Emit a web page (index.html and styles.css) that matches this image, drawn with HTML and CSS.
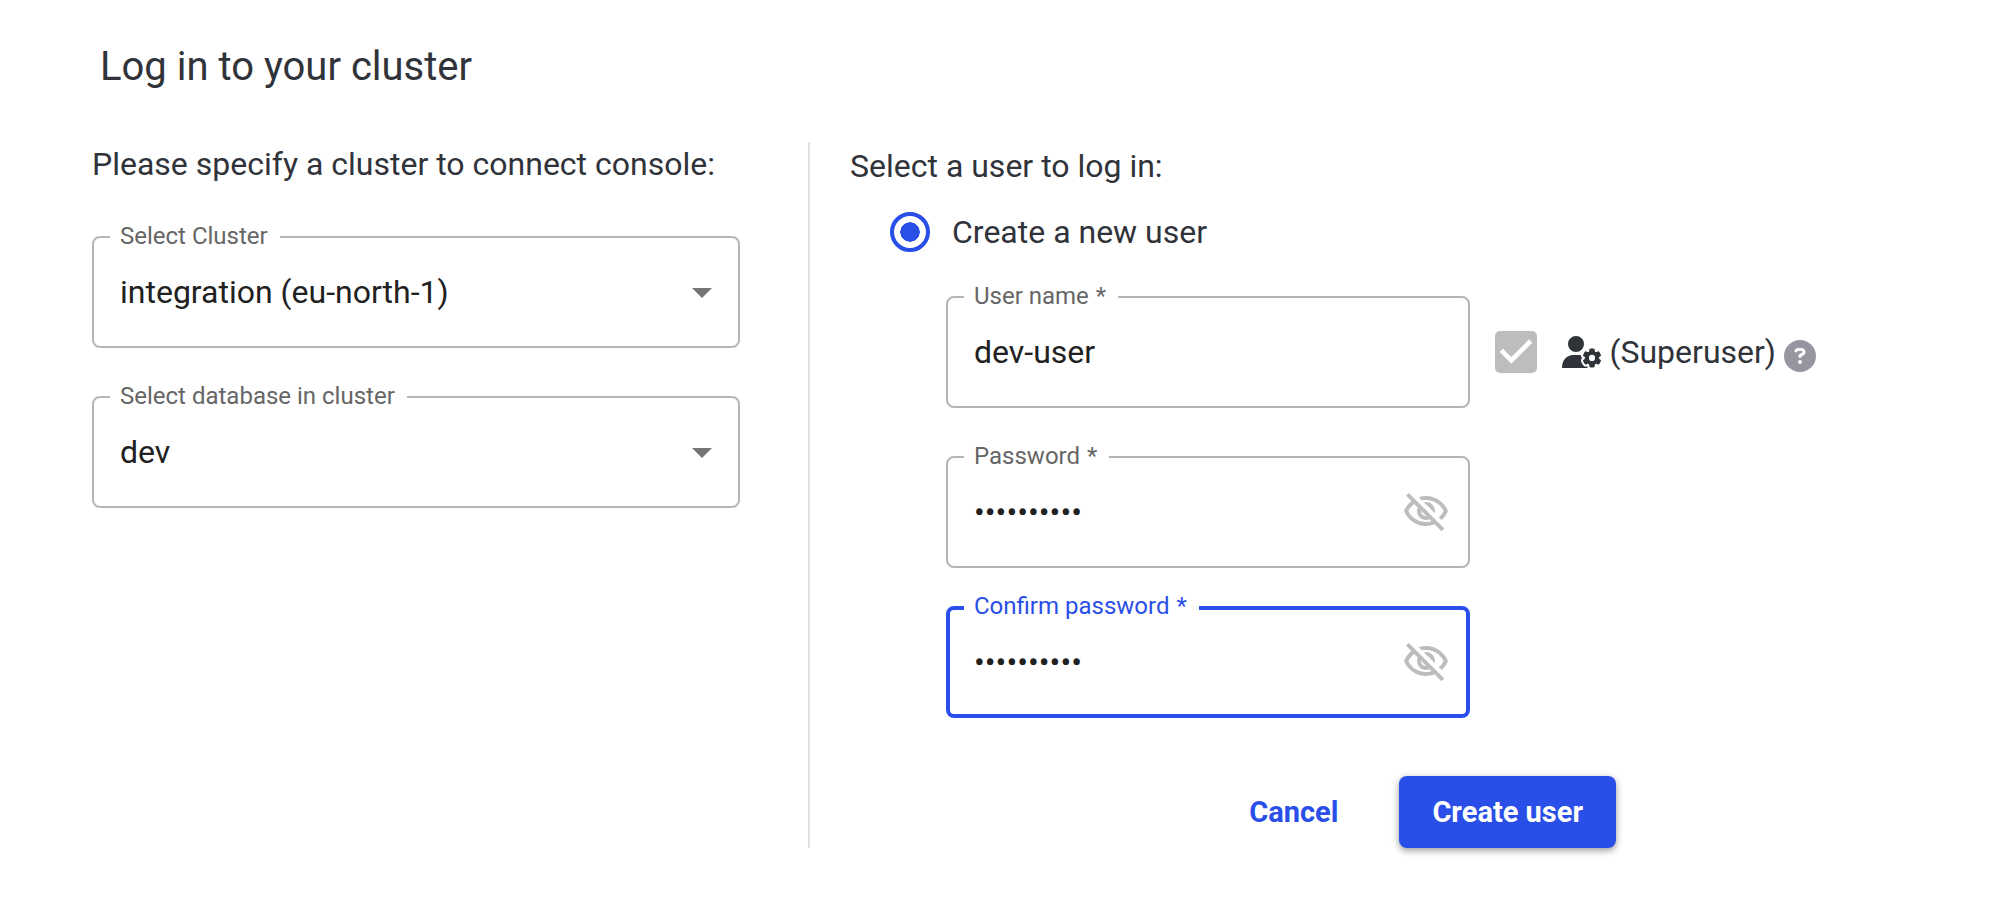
FILE: index.html
```html
<!DOCTYPE html>
<html lang="en">
<head>
<meta charset="utf-8">
<meta name="viewport" content="width=device-width, initial-scale=1">
<title>Log in to your cluster</title>
<link rel="stylesheet" href="styles.css">
</head>
<body>
<svg class="sprite" aria-hidden="true">
  <symbol id="eye-off" viewBox="0 0 24 24"><path d="M12 6c3.79 0 7.17 2.13 8.82 5.5-.59 1.22-1.42 2.27-2.41 3.12l1.41 1.41c1.39-1.23 2.49-2.77 3.18-4.53C21.27 7.11 17 4 12 4c-1.27 0-2.49.2-3.64.57l1.65 1.65C10.66 6.09 11.32 6 12 6zm-1.07 1.14L13 9.21c.57.25 1.03.71 1.28 1.28l2.07 2.07c.08-.34.14-.7.14-1.07C16.5 9.01 14.48 7 12 7c-.37 0-.72.05-1.07.14zM2.01 3.87l2.68 2.68C3.06 7.83 1.77 9.53 1 11.5 2.73 15.89 7 19 12 19c1.52 0 2.98-.29 4.32-.82l3.42 3.42 1.41-1.41L3.42 2.45 2.01 3.87zm7.5 7.5l2.61 2.61c-.04.01-.08.02-.12.02-1.38 0-2.5-1.12-2.5-2.5 0-.05.01-.08.01-.13zm-3.4-3.4l1.75 1.75c-.23.55-.36 1.15-.36 1.78 0 2.48 2.02 4.5 4.5 4.5.63 0 1.23-.13 1.77-.36l.98.98c-.88.24-1.8.38-2.75.38-3.79 0-7.17-2.13-8.82-5.5.7-1.43 1.72-2.61 2.93-3.53z"/></symbol>
  <symbol id="caret" viewBox="0 0 20 10"><path d="M0 0h20L10 10z"/></symbol>
</svg>
<main class="page">
  <h1 class="title">Log in to your cluster</h1>
  <form class="columns">
    <section class="cluster">
      <h2 class="heading">Please specify a cluster to connect console:</h2>
      <div class="stack">
        <div class="field">
          <label class="field-label" for="cluster">Select Cluster</label>
          <select class="control" id="cluster"><option>integration (eu-north-1)</option></select>
          <svg class="caret" aria-hidden="true"><use href="#caret"/></svg>
        </div>
        <div class="field">
          <label class="field-label" for="database">Select database in cluster</label>
          <select class="control" id="database"><option>dev</option></select>
          <svg class="caret" aria-hidden="true"><use href="#caret"/></svg>
        </div>
      </div>
    </section>
    <section class="user">
      <h2 class="heading">Select a user to log in:</h2>
      <label class="choice"><input class="radio" type="radio" name="mode" checked>Create a new user</label>
      <div class="new-user">
        <div class="field">
          <label class="field-label" for="username">User name<span class="required">*</span></label>
          <input class="control" id="username" type="text" value="dev-user">
        </div>
        <div class="superuser">
          <span class="check">
            <input class="checkbox" id="superuser" type="checkbox" checked disabled>
            <svg class="check-mark" viewBox="3 3 18 18" aria-hidden="true"><path d="M10 17l-5-5 1.41-1.41L10 14.17l7.59-7.59L19 8l-9 9z"/></svg>
          </span>
          <label class="superuser-label" for="superuser">
            <svg class="user-gear" viewBox="0 0 640 512" aria-hidden="true"><path d="M224 0a128 128 0 1 1 0 256A128 128 0 1 1 224 0zM178.3 304h91.4c11.8 0 23.4 1.2 34.5 3.3c-2.1 18.5 7.4 35.6 21.8 44.8c-16.6 10.6-26.7 31.6-20 53.3c4 12.9 9.4 25.5 16.4 37.6s15.2 23.1 24.4 33c15.7 16.9 39.6 18.4 57.2 8.7v.9c0 9.2 2.7 18.5 7.9 26.3H0C0 383.8 79.8 304 178.3 304zM436 218.2c0-7 4.5-13.3 11.3-14.8c10.5-2.4 21.5-3.7 32.7-3.7s22.2 1.3 32.7 3.7c6.8 1.5 11.3 7.8 11.3 14.8v17.7c0 7.8 4.8 14.8 11.6 18.7c6.8 3.9 15.1 4.5 21.8 .6l13.8-7.9c6.1-3.5 13.7-2.7 18.5 2.4c7.6 8.1 14.3 17.2 20.1 27.2s10.3 20.4 13.5 31c2.1 6.7-1.1 13.7-7.2 17.2l-14.4 8.3c-6.5 3.7-10 10.9-10 18.4s3.5 14.7 10 18.4l14.4 8.3c6.1 3.5 9.2 10.5 7.2 17.2c-3.3 10.6-7.8 21-13.5 31s-12.5 19.1-20.1 27.2c-4.8 5.1-12.5 5.9-18.5 2.4l-13.8-7.9c-6.7-3.9-15.1-3.3-21.8 .6c-6.8 3.9-11.6 10.9-11.6 18.7v17.7c0 7-4.5 13.3-11.3 14.8c-10.5 2.4-21.5 3.7-32.7 3.7s-22.2-1.3-32.7-3.7c-6.8-1.5-11.3-7.8-11.3-14.8V467.8c0-7.9-4.9-14.9-11.7-18.9c-6.8-3.9-15.2-4.5-22-.6l-13.5 7.8c-6.1 3.5-13.7 2.7-18.5-2.4c-7.6-8.1-14.3-17.2-20.1-27.2s-10.3-20.4-13.5-31c-2.1-6.7 1.1-13.7 7.2-17.2l14-8.1c6.5-3.8 10.1-11.1 10.1-18.6s-3.5-14.8-10.1-18.6l-14-8.1c-6.1-3.5-9.2-10.5-7.2-17.2c3.3-10.6 7.7-21 13.5-31s12.5-19.1 20.1-27.2c4.8-5.1 12.4-5.9 18.5-2.4l13.6 7.8c6.8 3.9 15.2 3.3 22-.6c6.9-3.9 11.7-11 11.7-18.9V218.2zm92.1 133.5a48.1 48.1 0 1 0 -96.1 0 48.1 48.1 0 1 0 96.1 0z"/></svg>
            (Superuser)
          </label>
          <button class="help" type="button" aria-label="About superusers">
            <svg class="help-icon" viewBox="0 0 512 512" aria-hidden="true"><path d="M256 512A256 256 0 1 0 256 0a256 256 0 1 0 0 512zM169.8 165.3c7.9-22.3 29.1-37.3 52.8-37.3h58.3c34.9 0 63.1 28.3 63.1 63.1c0 22.6-12.1 43.5-31.7 54.8L280 264.4c-.2 13-10.9 23.6-24 23.6c-13.3 0-24-10.7-24-24V250.5c0-8.6 4.6-16.5 12.1-20.8l44.3-25.4c4.7-2.7 7.6-7.7 7.6-13.1c0-8.4-6.8-15.1-15.1-15.1H222.6c-3.4 0-6.4 2.1-7.5 5.3l-.4 1.2c-4.4 12.5-18.2 19-30.6 14.6s-19-18.2-14.6-30.6l.4-1.2zM224 352a32 32 0 1 1 64 0 32 32 0 1 1 -64 0z"/></svg>
          </button>
        </div>
        <div class="passwords">
          <div class="field">
            <label class="field-label" for="password">Password<span class="required">*</span></label>
            <input class="control" id="password" type="password" value="devuser123">
            <button class="reveal" type="button" aria-label="Show password"><svg class="reveal-icon" aria-hidden="true"><use href="#eye-off"/></svg></button>
          </div>
          <div class="field field-active">
            <label class="field-label" for="confirm">Confirm password<span class="required">*</span></label>
            <input class="control" id="confirm" type="password" value="devuser123">
            <button class="reveal" type="button" aria-label="Show confirmed password"><svg class="reveal-icon" aria-hidden="true"><use href="#eye-off"/></svg></button>
          </div>
        </div>
      </div>
      <div class="actions">
        <button class="button" type="button">Cancel</button>
        <button class="button button-primary" type="submit">Create user</button>
      </div>
    </section>
  </form>
</main>
</body>
</html>
```
FILE: styles.css
```css
:root {
  --blue: #294fe8;
  --ink: #30333a;
  --line: #b5b5bc;
}

* {
  box-sizing: border-box;
}

body {
  margin: 0;
  background: #fff;
  color: var(--ink);
  font-family: Roboto, "Liberation Sans", sans-serif;
  font-size: 32px;
  line-height: 40px;
}

.sprite {
  display: none;
}

.page {
  padding: 43px 188px 56px 92px;
}

.title {
  margin: 0 0 51px;
  padding-left: 8px;
  font-size: 40px;
  font-weight: 400;
  line-height: 48px;
}

.columns {
  display: grid;
  grid-template-columns: 716fr 1008fr;
}

.heading {
  margin: 0;
  font-size: 32px;
  font-weight: 400;
}

.cluster {
  padding: 2px 68px 0 0;
}

.stack {
  display: grid;
  gap: 48px;
  margin-top: 52px;
}

.user {
  padding: 4px 0 0 40px;
  border-left: 2px solid #e0e0e0;
}

.field {
  position: relative;
}

.field-label {
  position: absolute;
  top: -14px;
  left: 18px;
  padding: 0 12px 0 10px;
  background: #fff;
  color: #666;
  font-size: 24px;
  line-height: 28px;
}

.required {
  padding-left: 7px;
}

.control {
  display: block;
  width: 100%;
  height: 112px;
  padding: 0 80px 0 26px;
  border: 2px solid var(--line);
  border-radius: 8px;
  outline: 0;
  appearance: none;
  background: #fff;
  color: #212121;
  font: inherit;
}

.field-active .control {
  padding: 0 78px 0 24px;
  border: 4px solid var(--blue);
}

.field-active .field-label {
  color: var(--blue);
}

.caret {
  position: absolute;
  top: 52px;
  right: 28px;
  width: 20px;
  height: 10px;
  fill: #757575;
  pointer-events: none;
}

.reveal {
  position: absolute;
  top: 32px;
  right: 20px;
  padding: 0;
  border: 0;
  background: none;
}

.reveal-icon {
  display: block;
  width: 48px;
  height: 48px;
  fill: #bdbdbd;
}

.choice {
  display: flex;
  align-items: center;
  gap: 22px;
  margin: 26px 0 44px 40px;
}

.radio {
  width: 40px;
  height: 40px;
  margin: 0;
  padding: 6px;
  border: 4px solid var(--blue);
  border-radius: 50%;
  appearance: none;
  background: radial-gradient(circle closest-side, var(--blue) 96%, transparent) content-box no-repeat;
}

.new-user {
  display: grid;
  grid-template-columns: minmax(0, 1fr) auto;
  column-gap: 25px;
  row-gap: 48px;
  padding-left: 96px;
}

.passwords {
  display: grid;
  gap: 38px;
}

.superuser {
  display: flex;
  align-items: center;
}

.check {
  position: relative;
  width: 42px;
  height: 42px;
  margin-right: 25px;
}

.checkbox {
  display: block;
  width: 100%;
  height: 100%;
  margin: 0;
  border-radius: 5px;
  appearance: none;
  background: #bdbdbd;
}

.check-mark {
  position: absolute;
  inset: 0;
  fill: #fff;
  pointer-events: none;
}

.superuser-label {
  display: flex;
  align-items: center;
  gap: 8px;
}

.user-gear {
  width: 40px;
  height: 32px;
  fill: currentColor;
}

.help {
  margin: 8px 0 0 8px;
  padding: 0;
  border: 0;
  background: none;
}

.help-icon {
  display: block;
  width: 32px;
  height: 32px;
  fill: #9696a0;
}

.actions {
  display: flex;
  justify-content: flex-end;
  gap: 28px;
  margin-top: 58px;
  padding-right: 200px;
}

.button {
  padding: 16px 33px;
  border: 0;
  border-radius: 8px;
  background: none;
  color: var(--blue);
  font-family: inherit;
  font-size: 29px;
  font-weight: 700;
  line-height: 40px;
}

.button-primary {
  background: var(--blue);
  color: #fff;
  box-shadow: 0 3px 6px rgba(0, 0, 0, 0.3), 0 1px 10px rgba(0, 0, 0, 0.12);
}
```
